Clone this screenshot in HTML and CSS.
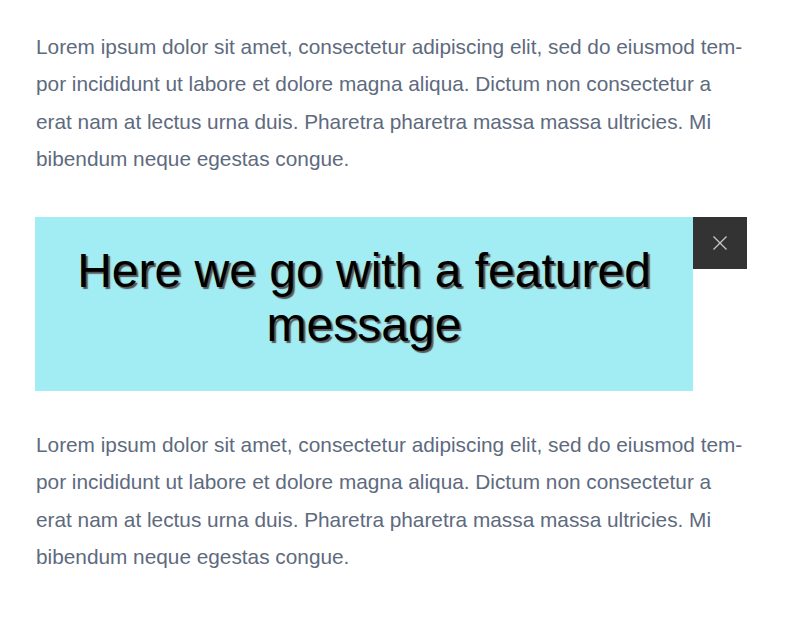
FILE: index.html
```html
<!DOCTYPE html>
<html lang="en">
<head>
<meta charset="utf-8">
<link rel="stylesheet" href="styles.css">
</head>
<body>
<main class="page">
  <p class="copy">Lorem ipsum dolor sit amet, consectetur adipiscing elit, sed do eiusmod tem&shy;por incididunt ut labore et dolore magna aliqua. Dictum non consectetur a erat nam at lectus urna duis. Pharetra pharetra massa massa ultricies. Mi bibendum neque egestas congue.</p>
  <div class="featured">
    <div class="featured-body">
      <h2 class="featured-title">Here we go with a featured message</h2>
    </div>
    <button class="close" aria-label="Close">
      <svg width="16" height="16" viewBox="0 0 16 16"><path d="M1.5 1.5 L14.5 14.5 M14.5 1.5 L1.5 14.5" stroke="#c8c8c8" stroke-width="1.3" fill="none"/></svg>
    </button>
  </div>
  <p class="copy">Lorem ipsum dolor sit amet, consectetur adipiscing elit, sed do eiusmod tem&shy;por incididunt ut labore et dolore magna aliqua. Dictum non consectetur a erat nam at lectus urna duis. Pharetra pharetra massa massa ultricies. Mi bibendum neque egestas congue.</p>
</main>
</body>
</html>
```
FILE: styles.css
```css
html, body {
  margin: 0;
  padding: 0;
  background: #ffffff;
}
.page {
  width: 712px;
  margin: 0 0 0 35px;
  padding-top: 28px;
}
.copy {
  margin: 0;
  font-family: "Liberation Sans", Arial, sans-serif;
  font-size: 20.8px;
  line-height: 1.8;
  color: #5e6a7e;
  padding-left: 1px;
}
.featured {
  display: flex;
  align-items: flex-start;
  margin: 39px 0 35px;
}
.featured-body {
  width: 658px;
  height: 174px;
  box-sizing: border-box;
  background: #a2ecf3;
  padding-top: 27px;
}
.featured-title {
  margin: 0;
  font-family: "Liberation Sans", Arial, sans-serif;
  font-weight: 400;
  font-size: 48px;
  line-height: 54px;
  color: #000;
  text-align: center;
  text-shadow: 2px 2px 1px #555;
}
.close {
  width: 54px;
  height: 52px;
  border: 0;
  padding: 0;
  background: #333333;
  display: flex;
  align-items: center;
  justify-content: center;
  cursor: pointer;
}
```
